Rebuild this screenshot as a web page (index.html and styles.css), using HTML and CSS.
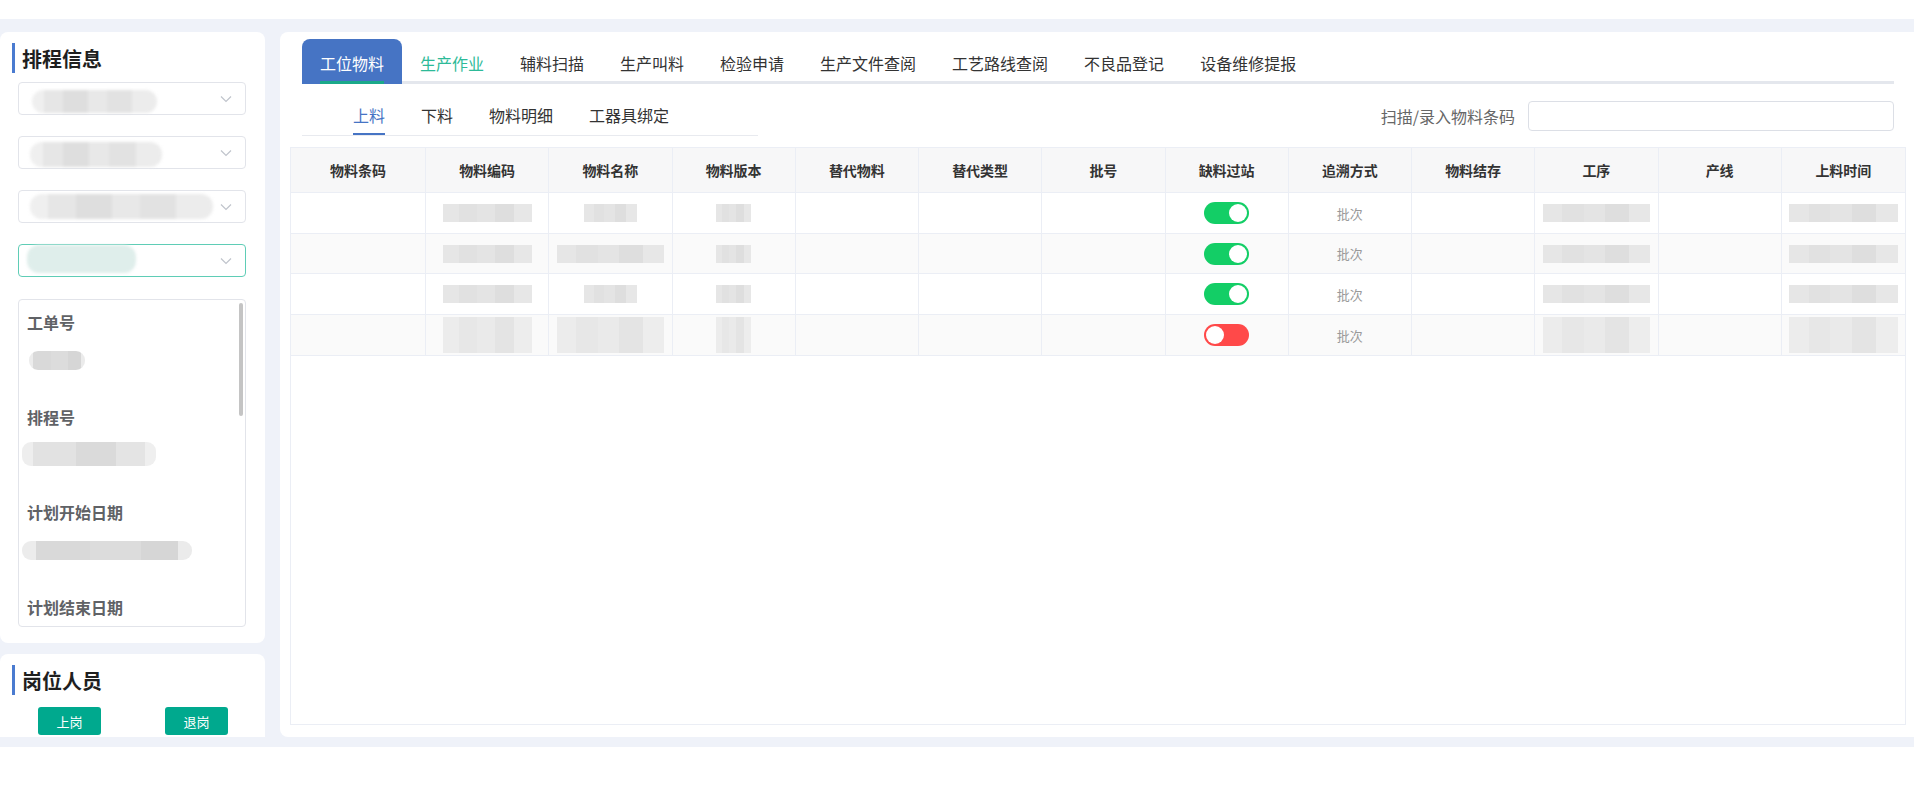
FILE: index.html
```html
<!DOCTYPE html>
<html lang="zh-CN">
<head>
<meta charset="utf-8">
<title>工位物料</title>
<link rel="stylesheet" href="styles.css">
</head>
<body>
<div class="topbar"></div>
<div class="main">
  <aside class="side">
    <div class="card card-plan">
      <div class="title"><span class="bar"></span><span>排程信息</span></div>
      <div class="select"><span class="blob b1"></span><svg class="chev" viewBox="0 0 12 8"><polyline points="1,1.5 6,6.5 11,1.5"/></svg></div>
      <div class="select"><span class="blob b2"></span><svg class="chev" viewBox="0 0 12 8"><polyline points="1,1.5 6,6.5 11,1.5"/></svg></div>
      <div class="select"><span class="blob b3"></span><svg class="chev" viewBox="0 0 12 8"><polyline points="1,1.5 6,6.5 11,1.5"/></svg></div>
      <div class="select focus"><span class="blob b4"></span><svg class="chev" viewBox="0 0 12 8"><polyline points="1,1.5 6,6.5 11,1.5"/></svg></div>
      <div class="info">
        <div class="info-item"><div class="label">工单号</div><div class="val v1"></div></div>
        <div class="info-item"><div class="label">排程号</div><div class="val v2"></div></div>
        <div class="info-item"><div class="label">计划开始日期</div><div class="val v3"></div></div>
        <div class="info-item"><div class="label">计划结束日期</div><div class="val v3"></div></div>
        <div class="scroll-thumb"></div>
      </div>
    </div>
    <div class="card card-staff">
      <div class="title"><span class="bar"></span><span>岗位人员</span></div>
      <div class="btns"><button class="btn">上岗</button><button class="btn">退岗</button></div>
    </div>
  </aside>
  <section class="content">
    <nav class="tabs">
      <div class="tab active">工位物料</div>
      <div class="tab hover">生产作业</div>
      <div class="tab">辅料扫描</div>
      <div class="tab">生产叫料</div>
      <div class="tab">检验申请</div>
      <div class="tab">生产文件查阅</div>
      <div class="tab">工艺路线查阅</div>
      <div class="tab">不良品登记</div>
      <div class="tab">设备维修提报</div>
    </nav>
    <div class="subbar">
      <div class="subtabs">
        <div class="subtab active">上料</div>
        <div class="subtab">下料</div>
        <div class="subtab">物料明细</div>
        <div class="subtab">工器具绑定</div>
      </div>
      <div class="scan"><span class="scan-label">扫描/录入物料条码</span><div class="scan-input"></div></div>
    </div>
    <div class="table">
      <div class="row head">
        <div class="cell">物料条码</div><div class="cell">物料编码</div><div class="cell">物料名称</div><div class="cell">物料版本</div><div class="cell">替代物料</div><div class="cell">替代类型</div><div class="cell">批号</div><div class="cell">缺料过站</div><div class="cell">追溯方式</div><div class="cell">物料结存</div><div class="cell">工序</div><div class="cell">产线</div><div class="cell">上料时间</div>
      </div>
      <div class="row">
        <div class="cell"></div><div class="cell"><span class="blk w89"></span></div><div class="cell"><span class="blk w53"></span></div><div class="cell"><span class="blk w35"></span></div><div class="cell"></div><div class="cell"></div><div class="cell"></div><div class="cell"><span class="switch on"></span></div><div class="cell muted">批次</div><div class="cell"></div><div class="cell"><span class="blk w107"></span></div><div class="cell"></div><div class="cell"><span class="blk w109"></span></div>
      </div>
      <div class="row alt short">
        <div class="cell"></div><div class="cell"><span class="blk w89"></span></div><div class="cell"><span class="blk w107"></span></div><div class="cell"><span class="blk w35"></span></div><div class="cell"></div><div class="cell"></div><div class="cell"></div><div class="cell"><span class="switch on"></span></div><div class="cell muted">批次</div><div class="cell"></div><div class="cell"><span class="blk w107"></span></div><div class="cell"></div><div class="cell"><span class="blk w109"></span></div>
      </div>
      <div class="row">
        <div class="cell"></div><div class="cell"><span class="blk w89"></span></div><div class="cell"><span class="blk w53"></span></div><div class="cell"><span class="blk w35"></span></div><div class="cell"></div><div class="cell"></div><div class="cell"></div><div class="cell"><span class="switch on"></span></div><div class="cell muted">批次</div><div class="cell"></div><div class="cell"><span class="blk w107"></span></div><div class="cell"></div><div class="cell"><span class="blk w109"></span></div>
      </div>
      <div class="row alt">
        <div class="cell"></div><div class="cell"><span class="blk w89 tall"></span></div><div class="cell"><span class="blk w107 tall"></span></div><div class="cell"><span class="blk w35 tall"></span></div><div class="cell"></div><div class="cell"></div><div class="cell"></div><div class="cell"><span class="switch off"></span></div><div class="cell muted">批次</div><div class="cell"></div><div class="cell"><span class="blk w107 tall"></span></div><div class="cell"></div><div class="cell"><span class="blk w109 tall"></span></div>
      </div>
    </div>
  </section>
</div>
</body>
</html>
```
FILE: styles.css
```css
* { box-sizing: border-box; }
html, body { margin: 0; padding: 0; background: #fff; }
body {
  width: 1914px;
  height: 790px;
  overflow: hidden;
  font-family: "Noto Sans CJK SC", "Noto Sans", "Liberation Sans", sans-serif;
  color: #303133;
}
.topbar { height: 19px; background: #fff; }
.main {
  height: 728px;
  background: #eff2f9;
  display: flex;
  gap: 15px;
  padding: 13px 0 10px 0;
}
.side {
  width: 265px;
  flex: none;
  display: flex;
  flex-direction: column;
  gap: 11px;
  overflow: hidden;
}
.card {
  background: #fff;
  border-radius: 8px;
}
.card-plan {
  height: 611px;
  flex: none;
  padding: 11px 19px 0 18px;
}
.card-staff {
  flex: 1;
  padding: 11px 0 0 0;
  overflow: hidden;
  border-radius: 8px 8px 0 0;
}
.title {
  display: flex;
  align-items: center;
  height: 30px;
  font-size: 20px;
  font-weight: 700;
  color: #1f1f1f;
}
.card-plan .title { margin-left: -6px; }
.card-staff .title { padding-left: 12px; }
.title .bar {
  width: 3px;
  height: 30px;
  background: #4a7bd0;
  margin-right: 7px;
}
.select {
  position: relative;
  height: 33px;
  border: 1px solid #e2e4ea;
  border-radius: 4px;
  margin-top: 21px;
}
.card-plan .title + .select { margin-top: 9px; }
.select.focus { border-color: #5fcdb6; }
.chev {
  position: absolute;
  right: 13px;
  top: 12px;
  width: 12px;
  height: 8px;
  fill: none;
  stroke: #c0c4cc;
  stroke-width: 1.2;
}
.blob {
  position: absolute;
  border-radius: 12px;
  background: linear-gradient(90deg, #efefef 0 10%, #e6e6e6 10% 25%, #dedede 25% 45%, #e8e8e8 45% 60%, #e2e2e2 60% 80%, #ececec 80% 100%);
  filter: blur(1.5px);
}
.b1 { left: 13px; top: 7px; width: 125px; height: 23px; }
.b2 { left: 11px; top: 5px; width: 132px; height: 25px; }
.b3 { left: 11px; top: 3px; width: 183px; height: 25px; }
.b4 { left: 8px; top: 0px; width: 109px; height: 28px; background: #dfeeeb; }
.info {
  position: relative;
  margin-top: 22px;
  height: 328px;
  border: 1px solid #e2e4ea;
  border-radius: 4px;
  overflow: hidden;
  padding-left: 8px;
}
.info-item { height: 95px; padding-top: 10px; }
.label {
  font-size: 16px;
  line-height: 24px;
  font-weight: 700;
  color: #606266;
}
.val {
  margin-top: 17px;
  height: 19px;
  border-radius: 9px;
  background: linear-gradient(90deg, #ececec 0 8%, #d9d9d9 8% 40%, #dcdcdc 40% 70%, #d6d6d6 70% 92%, #ebebeb 92% 100%);
}
.v1 { width: 56px; margin-left: 2px; }
.v2 { width: 134px; margin-left: -5px; height: 24px; margin-top: 13px; background: linear-gradient(90deg, #eeeeee 0 8%, #e2e2e2 8% 40%, #dadada 40% 70%, #e4e4e4 70% 92%, #efefef 92% 100%); }
.v3 { width: 170px; margin-left: -5px; }
.scroll-thumb {
  position: absolute;
  right: 2px;
  top: 3px;
  width: 4px;
  height: 113px;
  border-radius: 2px;
  background: #c4c4c4;
}
.btns {
  display: flex;
  gap: 64px;
  padding-left: 38px;
  margin-top: 12px;
}
.btn {
  width: 63px;
  height: 28px;
  border: none;
  border-radius: 3px;
  background: #00a98e;
  color: #fff;
  font-family: inherit;
  font-size: 13px;
  padding: 0;
}
.content {
  flex: 1;
  background: #fff;
  border-radius: 8px 0 0 8px;
  padding: 7px 20px 12px 22px;
  display: flex;
  flex-direction: column;
  min-width: 0;
}
.tabs {
  display: flex;
  height: 45px;
  flex: none;
  box-shadow: inset 0 -3px 0 #e4e7ed;
}
.tab {
  position: relative;
  padding: 3px 18px 0;
  display: flex;
  align-items: center;
  font-size: 16px;
  color: #333;
  white-space: nowrap;
}
.tab.hover { color: #2dba98; }
.tab.active {
  background: #4674c4;
  color: #fff;
  border-radius: 8px 8px 0 0;
}
.tab.active::after {
  content: "";
  position: absolute;
  left: 18px;
  right: 18px;
  bottom: 0;
  height: 3px;
  background: #1aa98a;
}
.subbar {
  margin-top: 11px;
  display: flex;
  justify-content: space-between;
  align-items: center;
  flex: none;
}
.subtabs {
  width: 456px;
  display: flex;
  padding-left: 33px;
  border-bottom: 1px solid #e8eaef;
}
.subtab {
  position: relative;
  height: 40px;
  padding: 0 18px;
  display: flex;
  align-items: center;
  font-size: 16px;
  color: #333;
  white-space: nowrap;
}
.subtab.active { color: #4674c4; }
.subtab.active::after {
  content: "";
  position: absolute;
  left: 18px;
  right: 18px;
  bottom: 0;
  height: 2px;
  background: #4674c4;
}
.scan { display: flex; align-items: center; }
.scan-label { font-size: 16px; color: #666; margin-right: 13px; }
.scan-input {
  width: 366px;
  height: 30px;
  border: 1px solid #dcdfe6;
  border-radius: 4px;
}
.table {
  margin: 11px -12px 0 -12px;
  flex: 1;
  border: 1px solid #ebeef5;
}
.row {
  display: grid;
  grid-template-columns: 135px repeat(12, 1fr);
  height: 41px;
  border-bottom: 1px solid #ebeef5;
}
.row.short { height: 40px; }
.row.head {
  height: 45px;
  background: #f7f7f8;
}
.row.alt { background: #fafafa; }
.cell {
  border-right: 1px solid #ebeef5;
  display: flex;
  align-items: center;
  justify-content: center;
  font-size: 13px;
}
.cell:last-child { border-right: none; }
.head .cell { font-size: 14px; font-weight: 700; color: #333; }
.muted { color: #999; font-size: 13px; }
.blk {
  height: 18px;
  background: linear-gradient(90deg, #e6e6e6 0 18%, #e1e1e1 18% 38%, #e4e4e4 38% 58%, #dedede 58% 80%, #e7e7e7 80% 100%);
}
.blk.tall {
  height: 36px;
  background: linear-gradient(90deg, #ececec 0 18%, #e7e7e7 18% 38%, #eaeaea 38% 58%, #e4e4e4 58% 80%, #ededed 80% 100%);
}
.w35 { width: 35px; }
.w53 { width: 53px; }
.w89 { width: 89px; }
.w107 { width: 107px; }
.w109 { width: 109px; }
.switch {
  position: relative;
  width: 45px;
  height: 22px;
  border-radius: 11px;
}
.switch::after {
  content: "";
  position: absolute;
  top: 2px;
  width: 18px;
  height: 18px;
  border-radius: 50%;
  background: #fff;
}
.switch.on { background: #13ce66; }
.switch.on::after { right: 2px; }
.switch.off { background: #ff4949; }
.switch.off::after { left: 2px; }
```
